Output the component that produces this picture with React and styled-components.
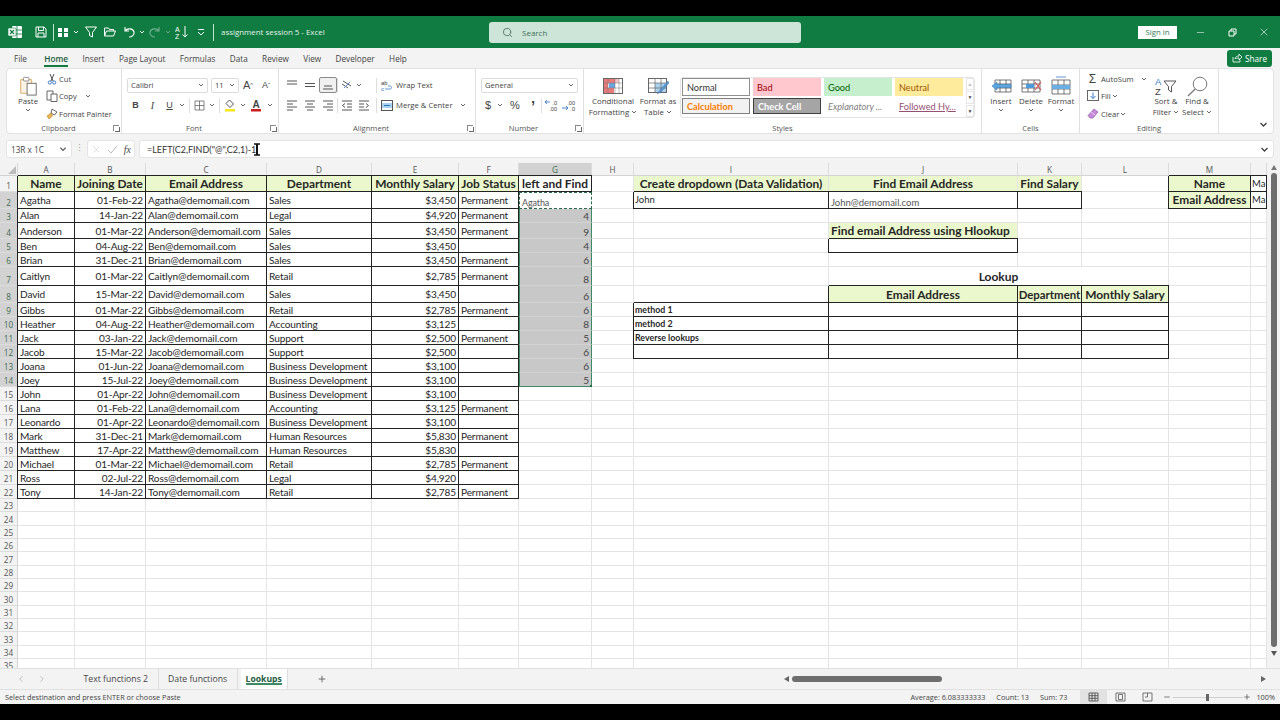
import styled, { createGlobalStyle, css } from 'styled-components'
import { ChevronLeft, ChevronRight, Minus, Plus, X, Search } from 'lucide-react'

const UI = `'Open Sans', 'Noto Sans', sans-serif`
const SHEET = `Lato, 'Liberation Sans', sans-serif`
const GREEN = '#107c41'
const FILL = '#ebf8cd'
const INK = '#222'

const GlobalStyle = createGlobalStyle`
  html, body { margin: 0; padding: 0; background: #000; }
  #root { width: 1280px; height: 720px; overflow: hidden; }
  * { box-sizing: border-box; }
`

const Screen = styled.div`
  width: 1280px;
  height: 720px;
  padding: 16px 0;
  background: #000;
  font-family: ${UI};
`

const Window = styled.div`
  height: 688px;
  display: flex;
  flex-direction: column;
  background: #f3f3f3;
  color: #333;
`

/* title bar */
const TitleBar = styled.div`
  height: 32px;
  flex: none;
  display: flex;
  align-items: center;
  padding-left: 6px;
  background: ${GREEN};
  color: #fff;
`

const Slot = styled.span`
  flex: none;
  display: inline-flex;
  align-items: center;
  justify-content: center;
  width: ${({ $w }) => $w}px;
  margin-left: ${({ $ml }) => $ml || 0}px;
  opacity: ${({ $dim }) => ($dim ? 0.4 : 1)};
`

const TitleSep = styled.span`
  flex: none;
  width: 1px;
  height: 17px;
  margin-left: 3px;
  background: #bfe0cd;
`

const DocTitle = styled.span`
  width: 268px;
  flex: none;
  margin-left: 7px;
  font-size: 7.9px;
  color: #e6f3ec;
`

const SearchBox = styled.div`
  width: 312px;
  height: 21px;
  flex: none;
  display: flex;
  align-items: center;
  gap: 9px;
  padding-left: 13px;
  border-radius: 3px;
  background: #cde5d8;
  color: #44705a;
  font-size: 8px;
`

const SignIn = styled.button`
  width: 39px;
  height: 13px;
  margin-left: auto;
  margin-right: 7px;
  padding: 0;
  border: 0;
  background: #fff;
  color: #2f7a55;
  font: 7.8px ${UI};
`

const WindowControl = styled.span`
  width: 32px;
  display: flex;
  justify-content: center;
  color: #fff;
`

/* ribbon tabs */
const TabRow = styled.div`
  height: 20px;
  flex: none;
  display: flex;
  align-items: center;
  gap: 14.4px;
  padding: 0 8px 0 14px;
`

const RibbonTab = styled.span`
  position: relative;
  font-size: 8.2px;
  color: ${({ $active }) => ($active ? '#1d5c3a' : '#444')};
  font-weight: ${({ $active }) => ($active ? 600 : 400)};
  ${({ $active }) => $active && css`
    margin-left: 3px;
    &::after {
      content: '';
      position: absolute;
      left: 0;
      right: 0;
      bottom: -3px;
      height: 2px;
      background: ${GREEN};
    }
  `}
`

const Share = styled.button`
  width: 45px;
  height: 17px;
  margin-left: auto;
  display: flex;
  align-items: center;
  justify-content: center;
  gap: 3px;
  padding: 0;
  border: 0;
  border-radius: 3px;
  background: ${GREEN};
  color: #fff;
  font: 8.2px ${UI};
`

/* ribbon */
const Ribbon = styled.div`
  height: 66px;
  flex: none;
  display: flex;
  margin: 0 6px;
  padding-left: 1px;
  background: #fff;
  border: 1px solid #e2e2e2;
  border-radius: 4px;
`

const Group = styled.div`
  width: ${({ $w }) => $w}px;
  flex: none;
  display: flex;
  flex-direction: column;
  border-right: 1px solid #e0e0e0;
`

const GroupBody = styled.div`
  flex: 1;
  min-height: 0;
  display: flex;
  padding-left: ${({ $pad }) => $pad || 0}px;
`

const GroupLabel = styled.div`
  position: relative;
  flex: none;
  height: 10px;
  padding-right: ${({ $launch }) => ($launch ? 12 : 0)}px;
  text-align: center;
  font-size: 7.6px;
  line-height: 10px;
  color: #555;
`

const Launcher = styled.span`
  position: absolute;
  right: 2px;
  top: 2px;
  width: 6px;
  height: 6px;
  border: 1px solid #888;
  border-width: 1px 0 0 1px;
  &::after {
    content: '';
    position: absolute;
    left: 1px;
    top: 1px;
    width: 4px;
    height: 4px;
    border: 1px solid #666;
    border-width: 0 1px 1px 0;
  }
`

const BigButton = styled.div`
  width: ${({ $w }) => $w}px;
  flex: none;
  display: flex;
  flex-direction: column;
  align-items: center;
  padding-top: 7px;
  font-size: 7.9px;
  line-height: 10.7px;
  color: #444;
  text-align: center;
  white-space: nowrap;
`

const BigIcon = styled.div`
  height: 20px;
  display: flex;
  align-items: center;
  justify-content: center;
`

const SmallStack = styled.div`
  width: ${({ $w }) => $w}px;
  flex: none;
  display: flex;
  flex-direction: column;
  padding-top: 1px;
`

const SmallItem = styled.div`
  height: 17.5px;
  display: flex;
  align-items: center;
  gap: 1px;
  font-size: 7.6px;
  color: #444;
  white-space: nowrap;
`

const Rows = styled.div`
  display: flex;
  flex-direction: column;
  gap: 4px;
  padding-top: 8px;
`

const ToolRow = styled.div`
  height: 16px;
  display: flex;
  align-items: center;
  font-size: 7.7px;
  color: #444;
  white-space: nowrap;
`

const Combo = styled.div`
  width: ${({ $w }) => $w}px;
  height: 15px;
  flex: none;
  margin-left: ${({ $ml }) => $ml || 0}px;
  display: flex;
  align-items: center;
  justify-content: space-between;
  padding: 0 3px;
  border: 1px solid #dcdcdc;
  border-radius: 2px;
  background: #fff;
  font-size: 7.6px;
  color: #444;
`

const ToolSep = styled.span`
  flex: none;
  width: 1px;
  height: 15px;
  margin-left: ${({ $ml }) => $ml || 0}px;
  background: #dedede;
`

const PressedSlot = styled(Slot)`
  height: 16px;
  border: 1px solid #8a8a8a;
  border-radius: 2px;
  background: #f0f0f0;
`

const Face = styled.b`
  font-family: ${({ $serif }) => ($serif ? `'Liberation Serif', serif` : `'Liberation Sans', sans-serif`)};
  font-size: ${({ $size }) => $size || 9}px;
  font-weight: ${({ $thin }) => ($thin ? 400 : 700)};
  font-style: ${({ $it }) => ($it ? 'italic' : 'normal')};
  text-decoration: ${({ $un }) => ($un ? 'underline' : 'none')};
  color: #444;
`

const Gallery = styled.div`
  width: 295px;
  height: 41px;
  flex: none;
  margin-top: 8px;
  display: flex;
  padding: 0 0 0 1px;
  border: 1px solid #e4e4e4;
  border-radius: 3px;
`

const GalleryGrid = styled.div`
  display: grid;
  grid-template-columns: repeat(4, 68px);
  grid-template-rows: 18px 16px;
  column-gap: 3px;
  row-gap: 2px;
`

const StyleChip = styled.div`
  display: flex;
  align-items: center;
  padding-left: 4px;
  font-family: ${SHEET};
  font-size: 9.2px;
  white-space: nowrap;
  overflow: hidden;
  background: ${({ $bg }) => $bg || '#fff'};
  color: ${({ $fg }) => $fg || '#333'};
  font-weight: ${({ $bold }) => ($bold ? 700 : 400)};
  font-style: ${({ $it }) => ($it ? 'italic' : 'normal')};
  text-decoration: ${({ $un }) => ($un ? 'underline' : 'none')};
  border: ${({ $line }) => ($line ? `1px solid ${$line}` : '0')};
`

const GalleryScroll = styled.div`
  width: 8px;
  margin-left: 3px;
  display: flex;
  flex-direction: column;
  gap: 1px;
`

const GalleryStep = styled.span`
  flex: 1;
  display: flex;
  align-items: center;
  justify-content: center;
  border: 1px solid #e6e6e6;
  font-size: 5px;
  color: ${({ $dim }) => ($dim ? '#bbb' : '#444')};
`

const Collapse = styled.span`
  margin-left: auto;
  align-self: flex-end;
  padding: 0 5px 4px 0;
  display: flex;
`

/* formula bar */
const FormulaBar = styled.div`
  height: 18px;
  flex: none;
  margin-top: 6px;
  display: flex;
  align-items: stretch;
  padding: 0 6px;
`

const NameBox = styled.div`
  width: 66px;
  display: flex;
  align-items: center;
  justify-content: space-between;
  padding: 0 4px;
  background: #fff;
  border: 1px solid #e4e4e4;
  border-radius: 3px;
  font-size: 8.2px;
  color: #444;
`

const Grip = styled.span`
  width: 15px;
  text-align: center;
  font-size: 9px;
  line-height: 16px;
  color: #999;
`

const FxBox = styled.div`
  width: 48px;
  display: flex;
  align-items: center;
  justify-content: space-between;
  padding: 0 3px;
  background: #fff;
  border: 1px solid #e4e4e4;
  border-radius: 3px;
`

const Formula = styled.div`
  flex: 1;
  margin-left: 4px;
  display: flex;
  align-items: center;
  padding: 0 4px 0 7px;
  background: #fff;
  border: 1px solid #e4e4e4;
  border-radius: 3px;
  font-family: ${SHEET};
  font-size: 9px;
  color: #333;
`

const Caret = styled.svg`
  margin-left: -3px;
`

const FormulaEnd = styled.span`
  margin-left: auto;
  display: flex;
`

/* sheet */
const SheetArea = styled.div`
  flex: 1;
  min-height: 0;
  margin-top: 5px;
  display: flex;
  overflow: hidden;
  background: #fff;
`

const SheetGrid = styled.div`
  width: 1267px;
  display: grid;
  grid-template-columns: ${({ $cols }) => $cols};
  grid-template-rows: ${({ $rows }) => $rows};
  align-content: start;
  overflow: hidden;
`

const Corner = styled.div`
  position: relative;
  background: #f3f3f3;
  border-right: 1px solid #d8d8d8;
  border-bottom: 1px solid #d0d0d0;
  &::after {
    content: '';
    position: absolute;
    right: 1px;
    bottom: 1px;
    border: 4px solid transparent;
    border-right-color: #bbb;
    border-bottom-color: #bbb;
  }
`

const ColHead = styled.div`
  display: flex;
  align-items: center;
  justify-content: center;
  font-size: 8.2px;
  color: ${({ $on }) => ($on ? '#3e6b54' : '#555')};
  background: ${({ $on }) => ($on ? '#d2d2d2' : '#f3f3f3')};
  border-right: 1px solid #dcdcdc;
  border-bottom: ${({ $on }) => ($on ? `1px solid #217346` : '1px solid #d4d4d4')};
`

const RowHead = styled.div`
  display: flex;
  align-items: flex-end;
  justify-content: center;
  font-size: 8.2px;
  line-height: 11px;
  color: ${({ $on }) => ($on ? '#3e6b54' : '#555')};
  background: ${({ $on }) => ($on ? '#d2d2d2' : '#f3f3f3')};
  border-bottom: 1px solid #dcdcdc;
  border-right: ${({ $on }) => ($on ? `1px solid #217346` : '1px solid #d4d4d4')};
`

const Cell = styled.div`
  position: relative;
  min-width: 0;
  display: flex;
  align-items: ${({ $low }) => ($low ? 'flex-end' : 'center')};
  justify-content: ${({ $align }) => $align || 'flex-start'};
  padding: 0 ${({ $tight }) => ($tight ? 1 : 2)}px;
  font-family: ${SHEET};
  font-size: ${({ $size }) => $size || 10.1}px;
  letter-spacing: ${({ $size }) => ($size ? 0 : -0.13)}px;
  font-weight: ${({ $bold }) => ($bold ? 700 : 400)};
  color: ${({ $color }) => $color || '#262626'};
  white-space: nowrap;
  background: ${({ $fill }) => $fill || '#fff'};
  border-right: 1px solid #e4e4e4;
  border-bottom: 1px solid #e4e4e4;
  grid-column: ${({ $span }) => ($span ? `span ${$span}` : 'auto')};

  ${({ $box }) => $box && css`
    border-right-color: ${INK};
    border-bottom-color: ${INK};
    box-shadow: -1px 0 0 ${INK}, 0 -1px 0 ${INK};
  `}

  ${({ $sel }) => $sel && css`
    background: #c8c8c8;
    border-bottom-color: #d2d2d2;
    border-right: 1.5px solid #3f8a66;
    border-left: 1.5px solid #3f8a66;
    align-items: flex-end;
    color: #444;
  `}

  ${({ $ants }) => $ants && css`
    background: #fff;
    border: 1.5px dashed #2d6a4c;
    align-items: flex-end;
    font-size: 9px;
    color: #555;
  `}

  ${({ $end }) => $end && css`
    border-bottom: 1.5px solid #3f8a66;
    &::after {
      content: '';
      position: absolute;
      right: -3px;
      bottom: -3px;
      width: 4px;
      height: 4px;
      background: #217346;
    }
  `}
`

const VScroll = styled.div`
  width: 13px;
  margin-top: -2px;
  display: flex;
  flex-direction: column;
  align-items: center;
  background: #f3f3f3;
`

const Arrow = styled.span`
  flex: none;
  width: 0;
  height: 0;
  margin: 4px 0;
  border: 3px solid transparent;
  ${({ $up }) => $up && css`border-top-width: 0; border-bottom: 5px solid #777;`}
  ${({ $down }) => $down && css`border-bottom-width: 0; border-top: 5px solid #555;`}
  ${({ $left }) => $left && css`border-left-width: 0; border-right: 5px solid #666; margin: 0;`}
  ${({ $right }) => $right && css`border-right-width: 0; border-left: 5px solid #666; margin: 0;`}
`

const VThumb = styled.span`
  width: 6px;
  height: 474px;
  margin-top: -1px;
  border-radius: 3px;
  background: #6e6e6e;
`

/* tabs + status */
const SheetBar = styled.div`
  height: 21px;
  flex: none;
  display: flex;
  align-items: center;
  border-top: 1px solid #e0e0e0;
  background: #f3f3f3;
`

const SheetNav = styled.span`
  width: 21px;
  display: flex;
  justify-content: center;
  color: #b5b5b5;
  margin-left: ${({ $ml }) => $ml || 0}px;
`

const SheetTabs = styled.div`
  display: flex;
  align-items: center;
  margin-left: 22px;
`

const SheetTab = styled.span`
  position: relative;
  height: 20px;
  display: flex;
  align-items: center;
  padding: 0 9.5px;
  font-size: 8.7px;
  color: #444;
  border-right: 1px solid #ddd;
  ${({ $active }) => $active && css`
    padding: 0 5px;
    margin: 0 3px;
    background: #fff;
    color: #1d5c3a;
    font-size: 8.6px;
    font-weight: 700;
    &::after {
      content: '';
      position: absolute;
      left: 5px;
      right: 5px;
      bottom: 4px;
      height: 2px;
      background: #3f8a66;
    }
  `}
`

const AddSheet = styled.span`
  margin-left: 26px;
  display: flex;
  color: #555;
`

const HScroll = styled.div`
  margin-left: auto;
  width: 482px;
  margin-right: 14px;
  display: flex;
  align-items: center;
`

const HThumb = styled.span`
  width: 150px;
  height: 6px;
  margin-left: 3px;
  border-radius: 3px;
  background: #6e6e6e;
`

const HEnd = styled(Arrow)`
  margin-left: auto;
`

const StatusBar = styled.div`
  height: 15px;
  flex: none;
  display: flex;
  align-items: center;
  padding-left: 5px;
  background: #f3f3f3;
  border-top: 1px solid #e0e0e0;
  font-size: 7.3px;
  color: #444;
`

const StatusStats = styled.div`
  margin-left: auto;
  display: flex;
  gap: 11px;
  margin-right: 13px;
`

const ViewButton = styled.span`
  width: 27px;
  height: 14px;
  display: flex;
  align-items: center;
  justify-content: center;
  background: ${({ $on }) => ($on ? '#e2e2e2' : 'transparent')};
`

const ZoomTrack = styled.span`
  position: relative;
  width: 70px;
  height: 1px;
  background: #cfcfcf;
  &::after {
    content: '';
    position: absolute;
    left: 33px;
    top: -3px;
    width: 3px;
    height: 7px;
    background: #666;
  }
`

const ZoomText = styled.span`
  margin: 0 5px 0 5px;
`

/* little drawings */
const Chev = ({ c = '#555', s = 6 }) => (
  <svg width={s} height={s} viewBox="0 0 6 6"><path d="M1 2l2 2 2-2" fill="none" stroke={c} strokeWidth="0.9" /></svg>
)

const Stroke = ({ w = 14, h = 14, d, c = '#555', sw = 1 }) => (
  <svg width={w} height={h} viewBox={`0 0 ${w} ${h}`}>
    <path d={d} fill="none" stroke={c} strokeWidth={sw} />
  </svg>
)

const AL = {
  top: 'M2 3h10M2 6h10',
  mid: 'M2 5.5h10M2 8.5h10',
  bot: 'M3 8h8M2 11h10',
  left: 'M2 3h10M2 6h6M2 9h10M2 12h6',
  center: 'M2 3h10M4 6h6M2 9h10M4 12h6',
  right: 'M2 3h10M6 6h6M2 9h10M6 12h6',
  indL: 'M2 3h10M7 6h5M7 9h5M2 12h10M5 5.5L2.5 7.5 5 9.5',
  indR: 'M2 3h10M2 6h5M2 9h5M2 12h10M9 5.5l2.5 2L9 9.5',
}

const ExcelLogo = () => (
  <svg width="16" height="16" viewBox="0 0 16 16">
    <rect x="5" y="2" width="10" height="12" rx="1" fill="#fff" />
    <path d="M10 2v12M5 6h10M5 10h10" stroke={GREEN} strokeWidth="0.8" />
    <rect x="1" y="4" width="8" height="8" rx="1" fill="#fff" stroke={GREEN} strokeWidth="0.6" />
    <path d="M3 6l4 4M7 6l-4 4" stroke={GREEN} strokeWidth="1.2" />
  </svg>
)

const Paste = () => (
  <svg width="20" height="20" viewBox="0 0 20 22">
    <path d="M2 4h12v15H2z" fill="#fbf3e6" stroke="#d9a85c" />
    <rect x="5" y="1.5" width="6" height="4" rx="1" fill="#fff" stroke="#888" />
    <rect x="9" y="8" width="10" height="13" fill="#fff" stroke="#666" />
  </svg>
)

const Scissors = () => (
  <svg width="10" height="12" viewBox="0 0 10 12">
    <path d="M3 1l3 7M7 1L4 8" fill="none" stroke="#555" />
    <circle cx="2.8" cy="9.5" r="1.6" fill="none" stroke="#3b7cc4" />
    <circle cx="7.2" cy="9.5" r="1.6" fill="none" stroke="#3b7cc4" />
  </svg>
)

const CopyIcon = () => (
  <svg width="12" height="12" viewBox="0 0 12 12">
    <path d="M1 1h6v9H1z" fill="#fff" stroke="#666" />
    <path d="M5 4h6v7.5H5z" fill="#fff" stroke="#666" />
  </svg>
)

const Painter = () => (
  <svg width="12" height="12" viewBox="0 0 12 12">
    <path d="M6 1l5 3-2.5 3L5 5z" fill="#fff" stroke="#666" />
    <path d="M5 5L1 8l2 3 3.5-3z" fill="#e7b452" stroke="#b9821f" strokeWidth="0.6" />
  </svg>
)

const BorderIcon = () => (
  <svg width="11" height="11" viewBox="0 0 11 11">
    <path d="M1 1h9v9H1zM5.5 1v9M1 5.5h9" fill="none" stroke="#666" strokeWidth="0.8" />
  </svg>
)

const FillColor = () => (
  <svg width="12" height="13" viewBox="0 0 12 13">
    <path d="M5.5 1l4 4-3.5 3.5-4-4z" fill="#fff" stroke="#555" />
    <path d="M1 10h10v2.5H1z" fill="#f8e71c" />
  </svg>
)

const FontColor = () => (
  <svg width="12" height="13" viewBox="0 0 12 13">
    <text x="6" y="8.5" textAnchor="middle" fontSize="10" fontFamily="Liberation Sans" fontWeight="700" fill="#444">A</text>
    <path d="M1 10h10v2.5H1z" fill="#c81e1e" />
  </svg>
)

const Orient = () => (
  <svg width="12" height="12" viewBox="0 0 12 12">
    <path d="M2 2l8 5M1 5l6 4" stroke="#555" fill="none" />
    <path d="M3 9l6-6" stroke="#6c8fd0" fill="none" />
  </svg>
)

const WrapIcon = () => (
  <svg width="13" height="13" viewBox="0 0 13 13">
    <text x="1" y="5.8" fontSize="6" fontFamily="Liberation Sans" fill="#444">ab</text>
    <text x="1" y="12" fontSize="6" fontFamily="Liberation Sans" fill="#3b7cc4">c</text>
    <path d="M5 10h5c2 0 2-3 0-3H8" fill="none" stroke="#3b7cc4" strokeWidth="0.8" />
  </svg>
)

const MergeIcon = () => (
  <svg width="12" height="11" viewBox="0 0 12 11">
    <rect x="0.5" y="0.5" width="11" height="10" fill="#fff" stroke="#555" />
    <rect x="1" y="3" width="10" height="5" fill="#a9d2f0" />
    <path d="M3 5.5h6" stroke="#2a75b8" />
  </svg>
)

const DecIcon = ({ flip }) => (
  <svg width="15" height="13" viewBox="0 0 15 13">
    <text x="14" y="5.5" textAnchor="end" fontSize="5.6" fontFamily="Liberation Sans" fill="#444">{flip ? '.00' : '.0'}</text>
    <text x="14" y="12" textAnchor="end" fontSize="5.6" fontFamily="Liberation Sans" fill="#444">{flip ? '.0' : '.00'}</text>
    <path d={flip ? 'M1 9h6M5 7l2 2-2 2' : 'M7 3H2M4 1L2 3l2 2'} fill="none" stroke="#3b7cc4" strokeWidth="0.9" />
  </svg>
)

const CondFormat = () => (
  <svg width="20" height="16" viewBox="0 0 20 16">
    <rect x="0.5" y="0.5" width="19" height="15" fill="#fff" stroke="#666" />
    <path d="M1 1h6v4H1zM1 5h4v5H1zM7 1h5v4H7zM1 10h6v5H1zM7 10h4v5H7z" fill="#e97a7a" />
    <path d="M6 5h6v5H6z" fill="#6aa5de" />
    <path d="M12 1h4v4h-4z" fill="#f6c5c5" />
    <path d="M5 1v14M12 1v14M16 1v14M1 5h18M1 10h18" stroke="#777" strokeWidth="0.5" />
  </svg>
)

const TableFormat = () => (
  <svg width="21" height="18" viewBox="0 0 21 18">
    <rect x="0.5" y="1.5" width="18" height="14" fill="#fff" stroke="#666" />
    <path d="M7 6h11v9H7z" fill="#a9d2f0" />
    <path d="M1 6h18M1 11h18M7 2v14M13 2v14" stroke="#666" strokeWidth="0.7" />
    <path d="M20 4l-8 9-3 4 4-2 8-9z" fill="#5b97d0" stroke="#3f6e9c" strokeWidth="0.4" />
  </svg>
)

const InsertCells = () => (
  <svg width="21" height="18" viewBox="0 0 21 18">
    <path d="M4 3h16v12H4zM4 7h16M4 11h16M9 3v12M15 3v12" fill="none" stroke="#555" strokeWidth="0.8" />
    <path d="M1 9l5-4v2.5h14v3H6V13z" fill="#5aa6e0" stroke="#2a75b8" strokeWidth="0.5" />
  </svg>
)

const DeleteCells = () => (
  <svg width="21" height="18" viewBox="0 0 21 18">
    <path d="M1 3h18v12H1zM1 7h18M1 11h18M7 3v12M13 3v12" fill="none" stroke="#555" strokeWidth="0.8" />
    <path d="M5 7h8v4H5z" fill="#4e9ada" />
    <path d="M14 5l6 8M20 5l-6 8" stroke="#d65555" strokeWidth="1.1" />
  </svg>
)

const FormatCells = () => (
  <svg width="20" height="20" viewBox="0 0 20 20">
    <path d="M1 4h18v14H1zM1 9h18M1 13h18M7 4v14M13 4v14" fill="none" stroke="#555" strokeWidth="0.8" />
    <path d="M7 9h6v4H7zM1 9h6v4H1zM13 9h6v4h-6z" fill="#6aaee6" />
    <path d="M5 1h10" stroke="#3b7cc4" strokeWidth="0.8" />
  </svg>
)

const FillDown = () => (
  <svg width="12" height="12" viewBox="0 0 12 12">
    <rect x="0.5" y="0.5" width="11" height="10" fill="#fff" stroke="#666" />
    <path d="M6 2.5v6M3.5 6L6 8.5 8.5 6" fill="none" stroke="#3b7cc4" />
  </svg>
)

const Eraser = () => (
  <svg width="12" height="11" viewBox="0 0 12 11">
    <path d="M7 1l4 3-5 6H3L1 7.5z" fill="#c58ad8" stroke="#8d4aa5" strokeWidth="0.6" />
    <path d="M4 4l4 3" stroke="#fff" strokeWidth="0.6" />
  </svg>
)

const SortFilter = () => (
  <svg width="22" height="20" viewBox="0 0 22 20">
    <text x="0" y="9" fontSize="9.5" fontFamily="Liberation Sans" fill="#3b7cc4">A</text>
    <text x="0" y="19" fontSize="9.5" fontFamily="Liberation Sans" fill="#444">Z</text>
    <path d="M9 5h12l-4.5 5.5V16l-3-2v-3.5z" fill="#fff" stroke="#555" />
  </svg>
)

const Magnifier = () => (
  <svg width="21" height="21" viewBox="0 0 21 21">
    <circle cx="13" cy="8" r="6.8" fill="#fff" stroke="#777" />
    <path d="M8.2 13L1 20" stroke="#777" strokeWidth="1.2" />
  </svg>
)

const Cursor = () => (
  <Caret width="8" height="13" viewBox="0 0 8 13">
    <path d="M1 1h6M1 12h6" stroke="#111" strokeWidth="1.6" />
    <path d="M4 1v11" stroke="#111" strokeWidth="2" />
  </Caret>
)

/* sheet data */
const COL_WIDTHS = [18, 57, 71, 121, 105, 87, 60, 73, 42, 195, 189, 64, 87, 82, 16]
const ROW_HEIGHTS = [13, 15.5, 17, 14.5, 16, 14, 14, 19, 17, ...Array(14).fill(14), ...Array(13).fill(13.35)]
const COLS = 'ABCDEFGHIJKLMN'.split('')

const BD = 'Business Development'
const HR = 'Human Resources'
const PEOPLE = [
  ['Agatha', '01-Feb-22', 'Sales', '$3,450', 'Permanent'],
  ['Alan', '14-Jan-22', 'Legal', '$4,920', 'Permanent'],
  ['Anderson', '01-Mar-22', 'Sales', '$3,450', 'Permanent'],
  ['Ben', '04-Aug-22', 'Sales', '$3,450', ''],
  ['Brian', '31-Dec-21', 'Sales', '$3,450', 'Permanent'],
  ['Caitlyn', '01-Mar-22', 'Retail', '$2,785', 'Permanent'],
  ['David', '15-Mar-22', 'Sales', '$3,450', ''],
  ['Gibbs', '01-Mar-22', 'Retail', '$2,785', 'Permanent'],
  ['Heather', '04-Aug-22', 'Accounting', '$3,125', ''],
  ['Jack', '03-Jan-22', 'Support', '$2,500', 'Permanent'],
  ['Jacob', '15-Mar-22', 'Support', '$2,500', ''],
  ['Joana', '01-Jun-22', BD, '$3,100', ''],
  ['Joey', '15-Jul-22', BD, '$3,100', ''],
  ['John', '01-Apr-22', BD, '$3,100', ''],
  ['Lana', '01-Feb-22', 'Accounting', '$3,125', 'Permanent'],
  ['Leonardo', '01-Apr-22', BD, '$3,100', ''],
  ['Mark', '31-Dec-21', HR, '$5,830', 'Permanent'],
  ['Matthew', '17-Apr-22', HR, '$5,830', ''],
  ['Michael', '01-Mar-22', 'Retail', '$2,785', 'Permanent'],
  ['Ross', '02-Jul-22', 'Legal', '$4,920', ''],
  ['Tony', '14-Jan-22', 'Retail', '$2,785', 'Permanent'],
]
const G_VALUES = [4, 9, 4, 6, 8, 6, 6, 8, 5, 6, 6, 5]

const buildCells = () => {
  const s = {}
  const head = (t, extra) => ({ t, $bold: true, $fill: FILL, $box: true, $align: 'center', $size: 11.9, ...extra })
  ;['Name', 'Joining Date', 'Email Address', 'Department', 'Monthly Salary', 'Job Status'].forEach((t, i) => {
    s[`${COLS[i]}1`] = head(t)
  })
  s.G1 = { t: 'left and Find', $bold: true, $box: true, $align: 'center', $size: 11.9 }
  PEOPLE.forEach(([name, date, dept, pay, status], i) => {
    const r = i + 2
    s[`A${r}`] = { t: name, $box: true }
    s[`B${r}`] = { t: date, $box: true, $align: 'flex-end' }
    s[`C${r}`] = { t: `${name}@demomail.com`, $box: true }
    s[`D${r}`] = { t: dept, $box: true }
    s[`E${r}`] = { t: pay, $box: true, $align: 'flex-end' }
    s[`F${r}`] = { t: status, $box: true }
  })
  s.G2 = { t: 'Agatha', $ants: true }
  G_VALUES.forEach((v, i) => {
    s[`G${i + 3}`] = { t: v, $sel: true, $align: 'flex-end', $end: i === G_VALUES.length - 1 }
  })

  s.I1 = head('Create dropdown (Data Validation)', { $box: false })
  s.J1 = head('Find Email Address', { $box: false })
  s.K1 = head('Find Salary', { $box: false })
  s.M1 = head('Name')
  s.N1 = { t: 'Ma', $box: true, $size: 9.5, $tight: true }
  s.I2 = { t: 'John', $box: true, $size: 9.5, $tight: true }
  s.J2 = { t: 'John@demomail.com', $box: true, $size: 9.5, $color: '#555', $low: true }
  s.K2 = { $box: true }
  s.M2 = head('Email Address')
  s.N2 = { t: 'Ma', $box: true, $size: 9.5, $tight: true }
  s.J4 = head('Find email Address using Hlookup', { $box: false, $align: 'flex-start' })
  s.J5 = { $box: true }
  s.J7 = { t: 'Lookup', $bold: true, $size: 12, $align: 'center', $span: 3 }
  s.K7 = { $skip: true }
  s.L7 = { $skip: true }
  s.J8 = head('Email Address')
  s.K8 = head('Department', { $size: 11.4 })
  s.L8 = head('Monthly Salary')
  ;[9, 10, 11, 12].forEach((r) => {
    s[`I${r}`] = { $box: true, $bold: true, $size: 8.8, $tight: true }
    s[`J${r}`] = { $box: true }
    s[`K${r}`] = { $box: true }
    s[`L${r}`] = { $box: true }
  })
  s.I9.t = 'method 1'
  s.I10.t = 'method 2'
  s.I11.t = 'Reverse lookups'
  return s
}

const CELLS = buildCells()

const Sheet = () => (
  <SheetGrid
    $cols={COL_WIDTHS.map((w) => `${w}px`).join(' ')}
    $rows={ROW_HEIGHTS.map((h) => `${h}px`).join(' ')}
  >
    <Corner />
    {COLS.map((c) => (
      <ColHead key={c} $on={c === 'G'}>{c === 'N' ? '' : c}</ColHead>
    ))}
    {ROW_HEIGHTS.slice(1).map((_, i) => {
      const r = i + 1
      return [
        <RowHead key={`h${r}`} $on={r >= 2 && r <= 14}>{r}</RowHead>,
        ...COLS.map((c) => {
          const { t, $skip, ...rest } = CELLS[`${c}${r}`] || {}
          if ($skip) return null
          return <Cell key={`${c}${r}`} {...rest}>{t}</Cell>
        }),
      ]
    })}
  </SheetGrid>
)

const TABS = ['File', 'Home', 'Insert', 'Page Layout', 'Formulas', 'Data', 'Review', 'View', 'Developer', 'Help']

export default function App() {
  return (
    <Screen>
      <GlobalStyle />
      <Window>
        <TitleBar>
          <Slot $w={18}><ExcelLogo /></Slot>
          <Slot $w={18} $ml={8}><Stroke d="M2 2h8l2 2v8H2zM4.5 2v3.5h5V2M4 12V8h6v4" c="#fff" /></Slot>
          <TitleSep />
          <Slot $w={18}>
            <svg width="12" height="11" viewBox="0 0 12 11"><path d="M1 1h4v4H1zM7 1h4v4H7zM1 6h4v4H1zM7 6h4v4H7z" fill="#fff" /></svg>
          </Slot>
          <Slot $w={8}><Chev c="#fff" /></Slot>
          <Slot $w={20} $ml={1}><Stroke d="M1.5 2h11L8.5 7.5V12l-3-1.5v-3z" c="#fff" /></Slot>
          <Slot $w={18}><Stroke d="M1.5 11V3h4l1 1.5h4V6M1.5 11l2-5h9l-2 5z" c="#fff" /></Slot>
          <Slot $w={18} $ml={1}><Stroke d="M3 2v4h4M3 6c2-3 8-3 9 1 .5 3-2 5-5 5" c="#fff" sw={1.1} /></Slot>
          <Slot $w={8}><Chev c="#fff" /></Slot>
          <Slot $w={18} $dim><Stroke d="M11 2v4H7M11 6C9 3 3 3 2 7c-.5 3 2 5 5 5" c="#fff" sw={1.1} /></Slot>
          <Slot $w={8} $dim><Chev c="#fff" /></Slot>
          <Slot $w={20}>
            <svg width="14" height="14" viewBox="0 0 14 14">
              <text x="0" y="6.5" fontSize="7" fontFamily="Liberation Sans" fill="#fff">A</text>
              <text x="0" y="13.5" fontSize="7" fontFamily="Liberation Sans" fill="#fff">Z</text>
              <path d="M10 1v11M7.5 9.5L10 12l2.5-2.5" fill="none" stroke="#fff" />
            </svg>
          </Slot>
          <Slot $w={18}><Stroke w={10} h={10} d="M2 2.5h6M2 5l3 3 3-3" c="#fff" /></Slot>
          <TitleSep />
          <DocTitle>assignment session 5  -  Excel</DocTitle>
          <SearchBox><Search size={11} strokeWidth={1.5} color="#33594a" />Search</SearchBox>
          <SignIn>Sign in</SignIn>
          <WindowControl><Minus size={11} strokeWidth={1.2} /></WindowControl>
          <WindowControl>
            <svg width="9" height="9" viewBox="0 0 9 9"><path d="M1 3h5v5H1zM3 3V1h5v5H6" fill="none" stroke="#fff" /></svg>
          </WindowControl>
          <WindowControl><X size={12} strokeWidth={1.2} /></WindowControl>
        </TitleBar>

        <TabRow>
          {TABS.map((t) => (
            <RibbonTab key={t} $active={t === 'Home'}>{t}</RibbonTab>
          ))}
          <Share>
            <svg width="10" height="10" viewBox="0 0 10 10"><path d="M1 4v5h7V7M3 6c0-2 2-3 4-3V1l3 3-3 3V5C5 5 4 5 3 6z" fill="none" stroke="#fff" strokeWidth="0.8" /></svg>
            Share
          </Share>
        </TabRow>

        <Ribbon>
          <Group $w={114}>
            <GroupBody $pad={2}>
              <BigButton $w={36}>
                <BigIcon><Paste /></BigIcon>
                Paste
                <Chev />
              </BigButton>
              <SmallStack $w={76}>
                <SmallItem><Slot $w={12}><Scissors /></Slot>Cut</SmallItem>
                <SmallItem><Slot $w={12}><CopyIcon /></Slot>Copy<Slot $w={20}><Chev /></Slot></SmallItem>
                <SmallItem><Slot $w={12}><Painter /></Slot>Format Painter</SmallItem>
              </SmallStack>
            </GroupBody>
            <GroupLabel $launch>Clipboard<Launcher /></GroupLabel>
          </Group>

          <Group $w={157}>
            <GroupBody $pad={5}>
              <Rows>
                <ToolRow>
                  <Combo $w={81}>Calibri<Chev /></Combo>
                  <Combo $w={28} $ml={3}>11<Chev /></Combo>
                  <Slot $w={18}><Face $thin $size={11}>A</Face><Face $thin $size={6}>^</Face></Slot>
                  <Slot $w={18}><Face $thin $size={9}>A</Face><Face $thin $size={6}>ˇ</Face></Slot>
                </ToolRow>
                <ToolRow>
                  <Slot $w={17}><Face>B</Face></Slot>
                  <Slot $w={17}><Face $serif $thin $it $size={10}>I</Face></Slot>
                  <Slot $w={17}><Face $thin $un>U</Face></Slot>
                  <Slot $w={8}><Chev /></Slot>
                  <ToolSep $ml={3} />
                  <Slot $w={18}><BorderIcon /></Slot>
                  <Slot $w={8}><Chev /></Slot>
                  <ToolSep $ml={3} />
                  <Slot $w={20}><FillColor /></Slot>
                  <Slot $w={6}><Chev /></Slot>
                  <Slot $w={20}><FontColor /></Slot>
                  <Slot $w={8}><Chev /></Slot>
                </ToolRow>
              </Rows>
            </GroupBody>
            <GroupLabel $launch>Font<Launcher /></GroupLabel>
          </Group>

          <Group $w={197}>
            <GroupBody $pad={4}>
              <Rows>
                <ToolRow>
                  <Slot $w={18}><Stroke d={AL.top} /></Slot>
                  <Slot $w={18}><Stroke d={AL.mid} /></Slot>
                  <PressedSlot $w={18}><Stroke d={AL.bot} /></PressedSlot>
                  <ToolSep />
                  <Slot $w={17}><Orient /></Slot>
                  <Slot $w={8}><Chev /></Slot>
                  <ToolSep $ml={13} />
                  <Slot $w={19}><WrapIcon /></Slot>
                  Wrap Text
                </ToolRow>
                <ToolRow>
                  <Slot $w={18}><Stroke d={AL.left} /></Slot>
                  <Slot $w={18}><Stroke d={AL.center} /></Slot>
                  <Slot $w={18}><Stroke d={AL.right} /></Slot>
                  <ToolSep />
                  <Slot $w={17}><Stroke d={AL.indL} /></Slot>
                  <Slot $w={17}><Stroke d={AL.indR} /></Slot>
                  <ToolSep $ml={4} />
                  <Slot $w={19}><MergeIcon /></Slot>
                  Merge &amp; Center
                  <Slot $w={20}><Chev /></Slot>
                </ToolRow>
              </Rows>
            </GroupBody>
            <GroupLabel $launch>Alignment<Launcher /></GroupLabel>
          </Group>

          <Group $w={108}>
            <GroupBody $pad={5}>
              <Rows>
                <ToolRow><Combo $w={97}>General<Chev /></Combo></ToolRow>
                <ToolRow>
                  <Slot $w={14}><Face $thin $size={11}>$</Face></Slot>
                  <Slot $w={10}><Chev /></Slot>
                  <Slot $w={20}><Face $thin $size={11}>%</Face></Slot>
                  <Slot $w={16}><Face $size={15}>’</Face></Slot>
                  <ToolSep />
                  <Slot $w={17}><DecIcon /></Slot>
                  <Slot $w={18}><DecIcon flip /></Slot>
                </ToolRow>
              </Rows>
            </GroupBody>
            <GroupLabel $launch>Number<Launcher /></GroupLabel>
          </Group>

          <Group $w={398}>
            <GroupBody $pad={6}>
              <BigButton $w={46}>
                <BigIcon><CondFormat /></BigIcon>
                Conditional
                <span>Formatting <Chev /></span>
              </BigButton>
              <BigButton $w={44}>
                <BigIcon><TableFormat /></BigIcon>
                Format as
                <span>Table <Chev /></span>
              </BigButton>
              <Gallery>
                <GalleryGrid>
                  <StyleChip $line="#8f8f8f">Normal</StyleChip>
                  <StyleChip $bg="#ffc7ce" $fg="#9c0006">Bad</StyleChip>
                  <StyleChip $bg="#c6efce" $fg="#006100">Good</StyleChip>
                  <StyleChip $bg="#ffeb9c" $fg="#9c5700">Neutral</StyleChip>
                  <StyleChip $bg="#f2f2f2" $fg="#fa7d00" $bold $line="#7f7f7f">Calculation</StyleChip>
                  <StyleChip $bg="#a5a5a5" $fg="#fff" $bold $line="#3f3f3f">Check Cell</StyleChip>
                  <StyleChip $fg="#7f7f7f" $it>Explanatory ...</StyleChip>
                  <StyleChip $fg="#954f72" $un>Followed Hy...</StyleChip>
                </GalleryGrid>
                <GalleryScroll>
                  <GalleryStep $dim>▲</GalleryStep>
                  <GalleryStep>▼</GalleryStep>
                  <GalleryStep>▼</GalleryStep>
                </GalleryScroll>
              </Gallery>
            </GroupBody>
            <GroupLabel>Styles</GroupLabel>
          </Group>

          <Group $w={98}>
            <GroupBody $pad={4}>
              <BigButton $w={30}><BigIcon><InsertCells /></BigIcon>Insert<Chev /></BigButton>
              <BigButton $w={30}><BigIcon><DeleteCells /></BigIcon>Delete<Chev /></BigButton>
              <BigButton $w={30}><BigIcon><FormatCells /></BigIcon>Format<Chev /></BigButton>
            </GroupBody>
            <GroupLabel>Cells</GroupLabel>
          </Group>

          <Group $w={139}>
            <GroupBody $pad={5}>
              <SmallStack $w={66}>
                <SmallItem><Slot $w={15}><Face $thin $size={12}>Σ</Face></Slot>AutoSum<Slot $w={18}><Chev /></Slot></SmallItem>
                <SmallItem><Slot $w={15}><FillDown /></Slot>Fill<Chev /></SmallItem>
                <SmallItem><Slot $w={15}><Eraser /></Slot>Clear<Chev /></SmallItem>
              </SmallStack>
              <BigButton $w={30}>
                <BigIcon><SortFilter /></BigIcon>
                Sort &amp;
                <span>Filter <Chev /></span>
              </BigButton>
              <BigButton $w={32}>
                <BigIcon><Magnifier /></BigIcon>
                Find &amp;
                <span>Select <Chev /></span>
              </BigButton>
            </GroupBody>
            <GroupLabel>Editing</GroupLabel>
          </Group>

          <Collapse><Chev s={9} c="#444" /></Collapse>
        </Ribbon>

        <FormulaBar>
          <NameBox>13R x 1C<Chev s={8} /></NameBox>
          <Grip>⋮</Grip>
          <FxBox>
            <X size={11} strokeWidth={1} color="#bbb" />
            <Stroke w={11} h={11} d="M1 6l3 3 6-7" c="#bbb" />
            <Face $serif $it $thin $size={10}>fx</Face>
          </FxBox>
          <Formula>
            =LEFT(C2,FIND("@",C2,1)-1
            <Cursor />
            <FormulaEnd><Chev s={9} c="#444" /></FormulaEnd>
          </Formula>
        </FormulaBar>

        <SheetArea>
          <Sheet />
          <VScroll>
            <Arrow $up />
            <VThumb />
            <Arrow $down />
          </VScroll>
        </SheetArea>

        <SheetBar>
          <SheetNav $ml={10}><ChevronLeft size={10} /></SheetNav>
          <SheetNav><ChevronRight size={10} /></SheetNav>
          <SheetTabs>
            <SheetTab>Text functions 2</SheetTab>
            <SheetTab>Date functions</SheetTab>
            <SheetTab $active>Lookups</SheetTab>
          </SheetTabs>
          <AddSheet><Plus size={10} /></AddSheet>
          <HScroll>
            <Arrow $left />
            <HThumb />
            <HEnd $right />
          </HScroll>
        </SheetBar>

        <StatusBar>
          Select destination and press ENTER or choose Paste
          <StatusStats>
            <span>Average: 6.083333333</span>
            <span>Count: 13</span>
            <span>Sum: 73</span>
          </StatusStats>
          <ViewButton $on><Stroke w={11} h={10} d="M1 1h9v8H1zM4 1v8M7 1v8M1 3.7h9M1 6.3h9" c="#444" sw={0.8} /></ViewButton>
          <ViewButton><Stroke w={11} h={10} d="M1 1h9v8H1zM3.5 2.5h4v5h-4z" c="#555" sw={0.8} /></ViewButton>
          <ViewButton><Stroke w={11} h={10} d="M1 1h9v8H1zM5.5 1v4H3" c="#555" sw={0.8} /></ViewButton>
          <Slot $w={12}><Minus size={8} /></Slot>
          <ZoomTrack />
          <Slot $w={8}><Plus size={8} /></Slot>
          <ZoomText>100%</ZoomText>
        </StatusBar>
      </Window>
    </Screen>
  )
}
